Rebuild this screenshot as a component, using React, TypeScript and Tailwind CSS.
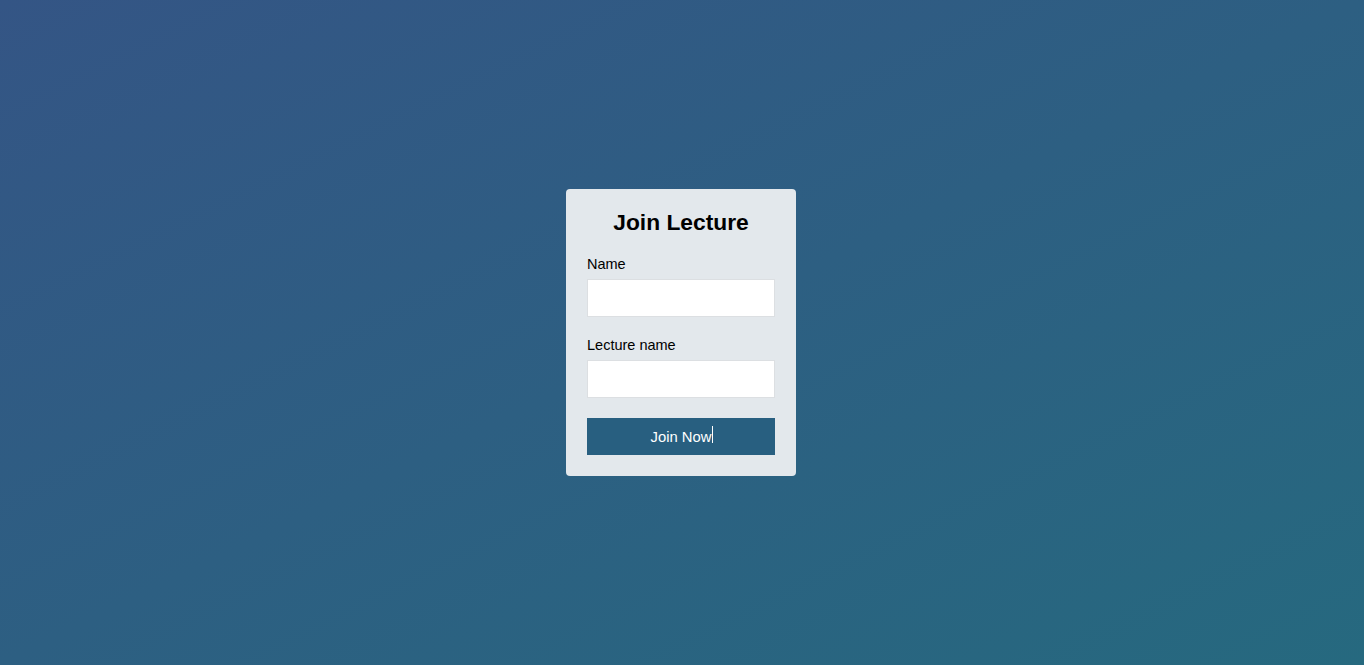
import React from "react";

export default function App() {
  return (
    <div
      className="w-full h-[665px] flex items-center justify-center bg-[linear-gradient(to_bottom_right,#345585,#26697f)]"
      style={{ fontFamily: '"Liberation Sans", Arial, sans-serif' }}
    >
      <div className="w-[230px] bg-[#e3e8ec] rounded-[4px] px-[21px] pt-[20px] pb-[21px] flex flex-col -mt-[1px] mr-[2px]">
        <h2 className="text-[22.8px] leading-[27px] font-bold text-black text-center mb-[20px]">
          Join Lecture
        </h2>
        <label className="text-[14.5px] leading-[16px] text-black mb-[7px]">Name</label>
        <input
          type="text"
          className="h-[38px] w-full bg-white border border-[#dcdfe2] outline-none mb-[20px]"
        />
        <label className="text-[14.5px] leading-[16px] text-black mb-[7px]">Lecture name</label>
        <input
          type="text"
          className="h-[38px] w-full bg-white border border-[#dcdfe2] outline-none mb-[20px]"
        />
        <button className="h-[37px] w-full bg-[#285f80] text-white text-[14.8px] flex items-center justify-center">
          <span className="relative top-[1px]">
            Join Now
            <span className="absolute right-[-2px] top-[0px] w-[1px] h-[17px] bg-white" />
          </span>
        </button>
      </div>
    </div>
  );
}
